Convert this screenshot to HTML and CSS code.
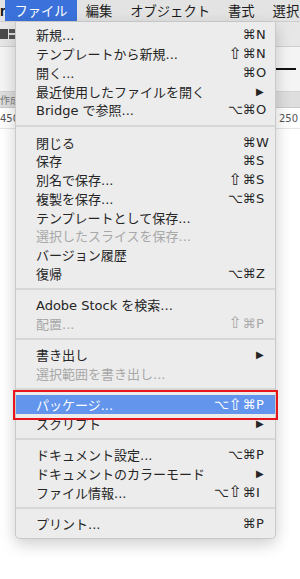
FILE: index.html
```html
<!DOCTYPE html>
<html lang="ja">
<head>
  <meta charset="UTF-8">
  <title>ファイル メニュー</title>
  <link rel="stylesheet" href="styles.css">
</head>
<body>

  <div class="app">
    <div class="menubar">
      <span class="mb-app">r</span>
      <span class="mb-item open">ファイル</span>
      <span class="mb-item">編集</span>
      <span class="mb-item">オブジェクト</span>
      <span class="mb-item">書式</span>
      <span class="mb-item">選択</span>
    </div>

    <div class="toolbar">
      <span class="tb-block"></span>
      <span class="tb-block lines"></span>
    </div>

    <div class="control">
      <span class="stroke"></span>
    </div>

    <div class="tabs">
      <span>作成</span>
    </div>

    <div class="ruler">
      <span>450</span>
      <span>250</span>
    </div>
  </div>

  <div class="menu">
    <div class="row"><span class="label">新規...</span><span class="keys"><span class="mod">⌘</span><span class="key">N</span></span></div>
    <div class="row"><span class="label">テンプレートから新規...</span><span class="keys"><span class="mod shift">⇧</span><span class="mod">⌘</span><span class="key">N</span></span></div>
    <div class="row"><span class="label">開く...</span><span class="keys"><span class="mod">⌘</span><span class="key">O</span></span></div>
    <div class="row"><span class="label">最近使用したファイルを開く</span><span class="keys"><span class="key arrow">▶</span></span></div>
    <div class="row"><span class="label">Bridge で参照...</span><span class="keys"><span class="mod">⌥</span><span class="mod">⌘</span><span class="key">O</span></span></div>
    <div class="sep first"></div>
    <div class="row"><span class="label">閉じる</span><span class="keys"><span class="mod">⌘</span><span class="key">W</span></span></div>
    <div class="row"><span class="label">保存</span><span class="keys"><span class="mod">⌘</span><span class="key">S</span></span></div>
    <div class="row"><span class="label">別名で保存...</span><span class="keys"><span class="mod shift">⇧</span><span class="mod">⌘</span><span class="key">S</span></span></div>
    <div class="row"><span class="label">複製を保存...</span><span class="keys"><span class="mod">⌥</span><span class="mod">⌘</span><span class="key">S</span></span></div>
    <div class="row"><span class="label">テンプレートとして保存...</span></div>
    <div class="row off"><span class="label">選択したスライスを保存...</span></div>
    <div class="row"><span class="label">バージョン履歴</span></div>
    <div class="row"><span class="label">復帰</span><span class="keys"><span class="mod">⌥</span><span class="mod">⌘</span><span class="key">Z</span></span></div>
    <div class="sep"></div>
    <div class="row"><span class="label">Adobe Stock を検索...</span></div>
    <div class="row off"><span class="label">配置...</span><span class="keys"><span class="mod shift">⇧</span><span class="mod">⌘</span><span class="key">P</span></span></div>
    <div class="sep"></div>
    <div class="row"><span class="label">書き出し</span><span class="keys"><span class="key arrow">▶</span></span></div>
    <div class="row off"><span class="label">選択範囲を書き出し...</span></div>
    <div class="sep"></div>
    <div class="row active"><span class="label">パッケージ...</span><span class="keys"><span class="mod">⌥</span><span class="mod shift">⇧</span><span class="mod">⌘</span><span class="key">P</span></span></div>
    <div class="row"><span class="label">スクリプト</span><span class="keys"><span class="key arrow">▶</span></span></div>
    <div class="sep"></div>
    <div class="row"><span class="label">ドキュメント設定...</span><span class="keys"><span class="mod">⌥</span><span class="mod">⌘</span><span class="key">P</span></span></div>
    <div class="row"><span class="label">ドキュメントのカラーモード</span><span class="keys"><span class="key arrow">▶</span></span></div>
    <div class="row"><span class="label">ファイル情報...</span><span class="keys"><span class="mod">⌥</span><span class="mod shift">⇧</span><span class="mod">⌘</span><span class="key">I</span></span></div>
    <div class="sep"></div>
    <div class="row"><span class="label">プリント...</span><span class="keys"><span class="mod">⌘</span><span class="key">P</span></span></div>
  </div>

  <div class="callout"></div>

</body>
</html>
```

FILE: styles.css
```css
body {
  margin: 0;
  width: 300px;
  height: 579px;
  overflow: hidden;
  position: relative;
  background: #fff;
  font-family: "DejaVu Sans", "Noto Sans CJK JP", sans-serif;
  font-size: 13px;
  color: #262626;
}

/* app window behind the menu */
.app {
  display: flex;
  flex-direction: column;
}

.menubar {
  display: flex;
  height: 22px;
  align-items: center;
  background: #e3e3e3;
  border-bottom: 1px solid #cfcfcf;
  box-sizing: border-box;
  white-space: nowrap;
  overflow: hidden;
}

.mb-app {
  width: 15px;
  font-weight: bold;
  font-family: "Liberation Sans", sans-serif;
  font-size: 14px;
  color: #111;
}

.mb-item {
  display: flex;
  align-items: center;
  height: 22px;
  padding: 0 9px;
  font-size: 13.3px;
  color: #1c1c1c;
}

.mb-item.open {
  background: #3b71da;
  color: #fff;
}

.toolbar {
  display: flex;
  gap: 1px;
  align-items: center;
  height: 25px;
  background: #e7e7e7;
  border-bottom: 1px solid #d0d0d0;
  box-sizing: border-box;
}

.tb-block {
  width: 8px;
  height: 10px;
  background: #4a4a4a;
}

.tb-block.lines {
  width: 7px;
  background: linear-gradient(#555 40%, #ddd 40%, #ddd 60%, #555 60%);
}

.control {
  display: flex;
  justify-content: flex-end;
  align-items: center;
  height: 45px;
  background: #f4f4f4;
  border-bottom: 1px solid #d2d2d2;
  box-sizing: border-box;
}

.stroke {
  width: 20px;
  height: 2px;
  margin-right: 4px;
  background: #111;
}

.tabs {
  height: 16px;
  display: flex;
  align-items: center;
  background: #dedede;
  border-bottom: 1px solid #cacaca;
  box-sizing: border-box;
  font-size: 10px;
  color: #777;
}

.ruler {
  display: flex;
  justify-content: space-between;
  height: 20px;
  align-items: center;
  font-size: 10px;
  color: #555;
  border-bottom: 1px solid #e6e6e6;
}

.ruler span:last-child {
  margin-right: 2px;
}

/* the dropped menu */
.menu {
  position: absolute;
  top: 22px;
  left: 15px;
  width: 261px;
  box-sizing: border-box;
  padding: 3.6px 0 5px;
  background: #ececec;
  border: 1px solid #c9c9c9;
  border-top: none;
  border-radius: 0 0 5px 5px;
  box-shadow: 0 5px 16px rgba(0, 0, 0, 0.2);
}

.row {
  display: flex;
  align-items: center;
  height: 18.75px;
  padding: 0 5px 0 20px;
  white-space: nowrap;
}

.row .label {
  flex: 1;
}

.row.off {
  color: #a8a8a8;
}

.row.active {
  background: #6395ec;
  color: #fff;
}

.keys {
  display: flex;
  align-items: center;
}

.mod {
  width: 14px;
  text-align: center;
}

.mod.shift {
  font-size: 16px;
  line-height: 1;
}

.key {
  width: 14px;
  text-align: left;
}

.key.arrow {
  font-size: 10px;
}

.sep {
  height: 12.5px;
  display: flex;
  align-items: center;
}

.sep.first {
  height: 13.5px;
}

.sep::after {
  content: "";
  flex: 1;
  height: 2px;
  background: #d7d7d7;
}

/* annotation box */
.callout {
  position: absolute;
  left: 13px;
  top: 390px;
  width: 265px;
  height: 29.5px;
  box-sizing: border-box;
  border: 2px solid #e8141b;
}
```
